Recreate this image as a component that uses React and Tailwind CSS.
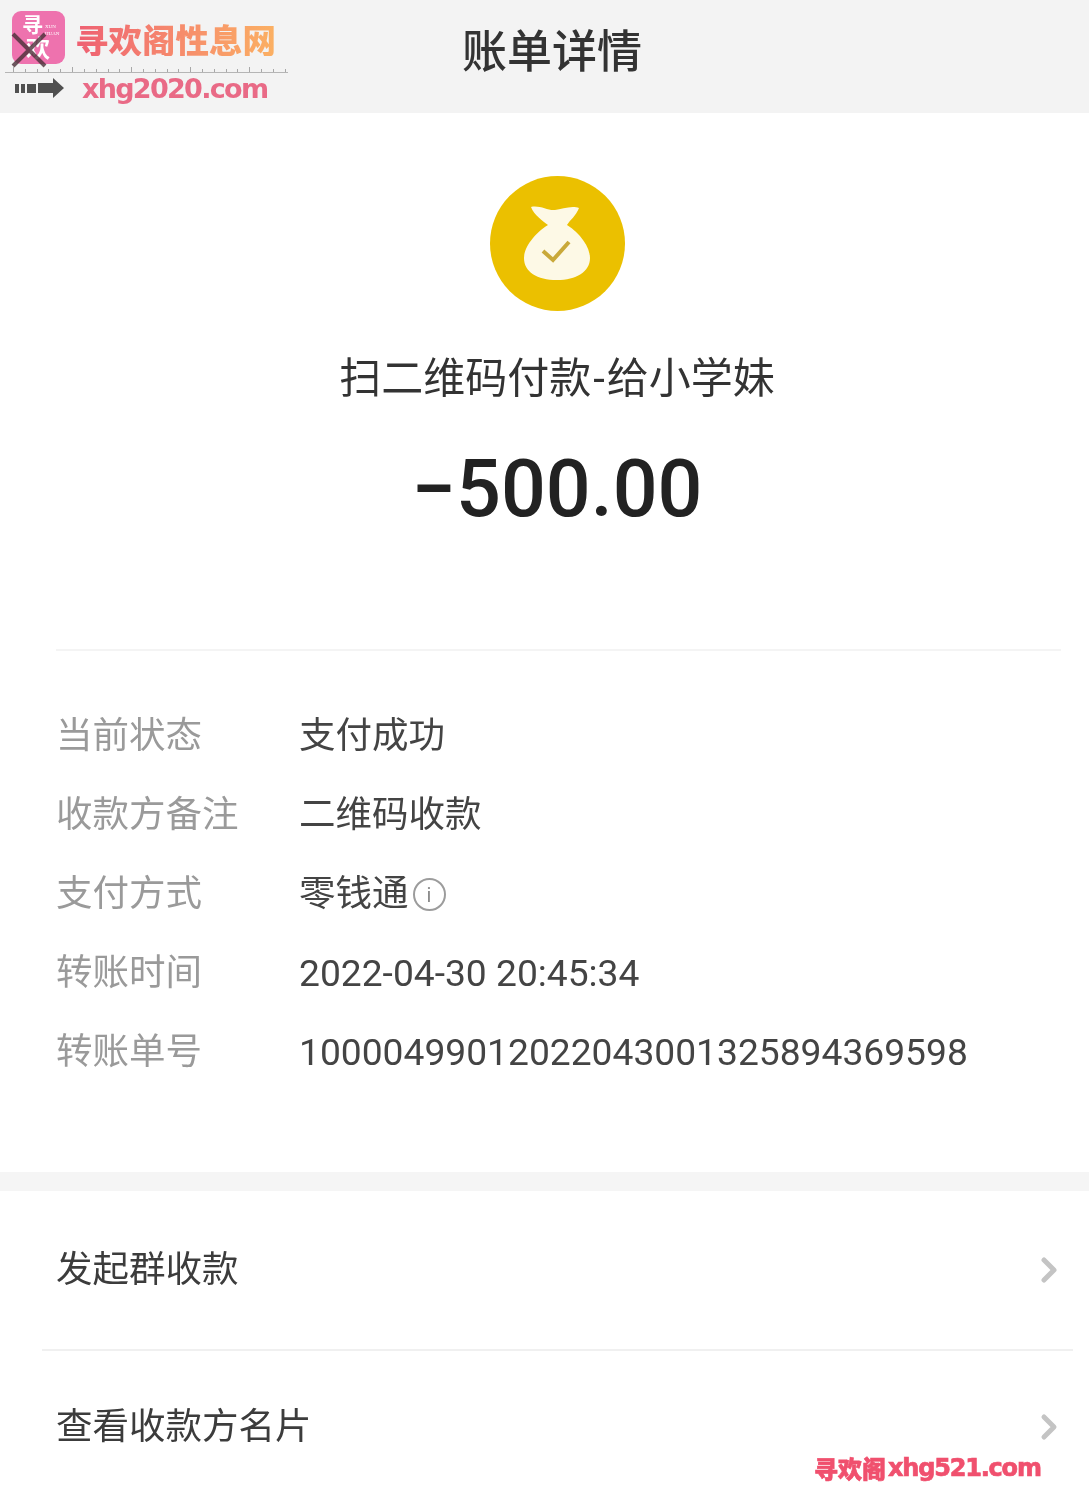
import { ChevronRight } from 'lucide-react'

const rows = [
  { label: '当前状态', value: '支付成功' },
  { label: '收款方备注', value: '二维码收款' },
  { label: '支付方式', value: '零钱通', info: true },
  { label: '转账时间', value: '2022-04-30 20:45:34', digits: true },
  { label: '转账单号', value: '10000499012022043001325894369598', digits: true },
]

const ticks = Array.from({ length: 24 }, (_, i) => i)

function Logo() {
  return (
    <div className="w-[283px] shrink-0">
      <div className="flex items-center h-[67px] pl-[7px] pt-[7px]">
        <div className="relative w-[53px] h-[53px] rounded-[9px] bg-[#ee72ae] overflow-visible">
          <span className="absolute left-[10px] top-[3px] text-white text-[21px] leading-[22px] font-bold">寻</span>
          <span className="absolute left-[14px] top-[26px] text-white text-[24px] leading-[24px] font-bold">欢</span>
          <span className="absolute left-[33px] top-[12px] text-[5px] leading-[7px] text-white" style={{ fontFamily: '"Liberation Serif", serif' }}>XUN<br />HUAN</span>
          <svg className="absolute left-[-2px] top-[20px]" width="38" height="38" viewBox="0 0 38 38">
            <path d="M3 3 L35 35 M35 3 L3 35" stroke="#4a3038" strokeWidth="4" opacity="0.8" />
          </svg>
        </div>
        <span className="ml-[10px] mt-[4px] text-[33.5px] leading-none font-black whitespace-nowrap bg-gradient-to-r from-[#ee5f72] to-[#fbb062] bg-clip-text text-transparent" style={{ fontFamily: '"Noto Sans CJK SC", sans-serif' }}>
          寻欢阁性息网
        </span>
      </div>
      <div className="flex justify-between items-end h-[5px] pl-[8px] pr-[2px]">
        {ticks.map((t) => (
          <span key={t} className={`w-px bg-[#a8a8a8] ${t % 5 === 0 ? 'h-[5px]' : 'h-[3px]'}`} />
        ))}
      </div>
      <div className="h-px bg-[#b5b5b5]" />
      <div className="flex items-center h-[30px] pl-[10px]">
        <div className="flex items-center gap-[2px] w-[49px]">
          <span className="w-[4px] h-[9px] bg-[#505050]" />
          <span className="w-[4px] h-[9px] bg-[#505050]" />
          <span className="w-[9px] h-[9px] bg-[#505050]" />
          <svg width="26" height="20" viewBox="0 0 26 20">
            <path d="M0 5 H15 V0 L26 10 L15 20 V15 H0 Z" fill="#505050" />
          </svg>
        </div>
        <span className="ml-[18px] text-[27px] leading-none font-bold text-[#e96a86]" style={{ fontFamily: '"DejaVu Sans", sans-serif', letterSpacing: '-1.7px' }}>
          xhg2020.com
        </span>
      </div>
    </div>
  )
}

function BagIcon() {
  return (
    <div className="w-[135px] h-[135px] rounded-full bg-[#ebc000] flex items-center justify-center">
      <svg width="70" height="76" viewBox="0 0 70 76">
        <path
          d="M9 1 C18 -1 26 5 33 4 C40 3 50 -1 57 2 C54 10 48 14 45 19 C58 27 68 41 68 52 C68 66 54 74 35 74 C15 74 2 66 2 52 C2 41 13 27 26 19 C21 15 12 9 9 1 Z"
          fill="#fdf9e6"
        />
        <path d="M21 45 L31 54 L47 36" fill="none" stroke="#c9a93a" strokeWidth="4" />
      </svg>
    </div>
  )
}

function LinkRow({ text, className = '' }) {
  return (
    <div className={`flex items-center justify-between pl-[56px] pr-[20px] ${className}`}>
      <span className="text-[36.5px] leading-none text-[#3c3c3c]">{text}</span>
      <ChevronRight size={40} strokeWidth={3} className="text-[#c4c4c4]" />
    </div>
  )
}

export default function App() {
  return (
    <div className="relative w-[1089px] h-[1498px] bg-white overflow-hidden blur-[0.5px]" style={{ fontFamily: 'Roboto, "Noto Sans CJK SC", sans-serif' }}>
      <header className="flex h-[113px] bg-[#f3f3f3] pl-[5px]">
        <Logo />
        <h1 className="ml-[174px] text-[45px] font-medium leading-[101px] pt-[2px] h-[103px] text-[#333]">账单详情</h1>
      </header>

      <section className="flex flex-col items-center pl-[25px] pt-[63px]">
        <BagIcon />
        <p className="mt-[40px] text-[42px] leading-[56px] text-[#333] whitespace-nowrap">
          扫二维码付款<span className="px-[2px]">-</span>给小学妹
        </p>
        <p className="mt-[35px] text-[79px] leading-[94px] font-medium text-[#222] whitespace-nowrap">−500.00</p>
      </section>

      <div className="mt-[113px] ml-[56px] mr-[28px] h-[2px] bg-[#f4f4f4]" />

      <section className="pl-[56px] pt-[58px] flex flex-col gap-[24px]">
        {rows.map((row) => (
          <div key={row.label} className="flex items-center h-[55px]">
            <span className="w-[243px] text-[36.5px] text-[#9a9a9a] whitespace-nowrap">{row.label}</span>
            <span className={`${row.digits ? 'text-[37.2px]' : 'text-[36.5px]'} text-[#444] whitespace-nowrap`}>{row.value}</span>
            {row.info && (
              <span className="ml-[4px] flex items-center justify-center w-[33px] h-[33px] rounded-full border-2 border-[#9c9c9c] text-[20px] leading-none text-[#8a8a8a]">i</span>
            )}
          </div>
        ))}
      </section>

      <div className="mt-[92px] h-[19px] bg-[#f5f5f5]" />

      <LinkRow text="发起群收款" className="h-[158px]" />
      <div className="ml-[42px] mr-[16px] h-[2px] bg-[#f0f0f0]" />
      <LinkRow text="查看收款方名片" className="h-[152px]" />

      <div className="absolute left-[814px] top-[1456px] flex items-center text-[#f0506e] font-black text-[24px] leading-none whitespace-nowrap [-webkit-text-stroke:0.7px_#f0506e]" style={{ fontFamily: '"Noto Sans CJK SC", sans-serif' }}>
        寻欢阁
        <span className="ml-[2px] font-bold text-[24px]" style={{ fontFamily: '"DejaVu Sans", sans-serif', letterSpacing: '-1.2px' }}>xhg521.com</span>
      </div>
    </div>
  )
}
